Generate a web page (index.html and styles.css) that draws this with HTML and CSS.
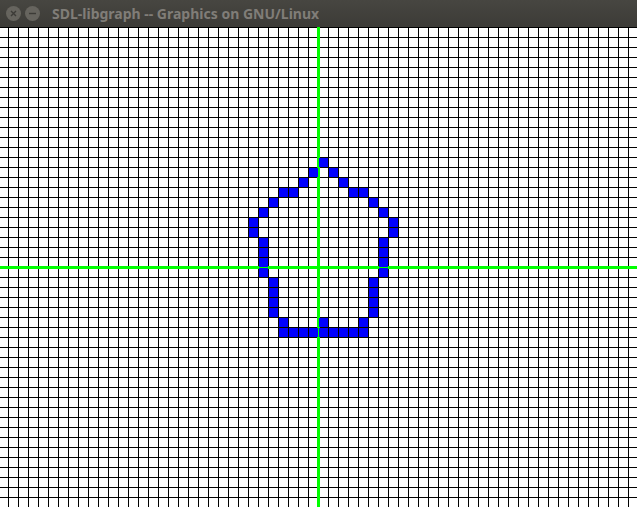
FILE: index.html
```html
<!DOCTYPE html>
<html lang="en">
<head>
<meta charset="utf-8">
<title>SDL-libgraph -- Graphics on GNU/Linux</title>
<link rel="stylesheet" href="styles.css">
</head>
<body>
<div class="window">
  <header class="titlebar">
    <button class="control" type="button" aria-label="Close">
      <svg viewBox="0 0 15 15" aria-hidden="true"><circle cx="7.5" cy="7.5" r="7.5"/><path d="M5 5l5 5M10 5l-5 5"/></svg>
    </button>
    <button class="control" type="button" aria-label="Minimize">
      <svg viewBox="0 0 15 15" aria-hidden="true"><circle cx="7.5" cy="7.5" r="7.5"/><path d="M4 7.5h7"/></svg>
    </button>
    <h1 class="title">SDL-libgraph -- Graphics on GNU/Linux</h1>
  </header>
  <main class="stage">
    <svg class="plot" role="img" aria-label="Pixel outline plotted on a grid" shape-rendering="crispEdges">
      <defs>
        <pattern id="cells" x="8" y="0" width="10" height="10" patternUnits="userSpaceOnUse">
          <path d="M0 0h10v1h-9v9h-1z"/>
        </pattern>
      </defs>
      <rect class="paper" width="100%" height="100%"/>
      <rect class="axis" x="317" y="0" width="3" height="100%"/>
      <rect class="axis" x="0" y="239" width="100%" height="3"/>
      <!-- One 9px square per plotted cell, on a 10px pitch -->
      <path class="ink" transform="translate(9 1)" d="
        M310 130h9v9h-9z
        M300 140h9v9h-9z M320 140h9v9h-9z
        M290 150h9v9h-9z M330 150h9v9h-9z
        M270 160h9v9h-9z M280 160h9v9h-9z M340 160h9v9h-9z M350 160h9v9h-9z
        M260 170h9v9h-9z M360 170h9v9h-9z
        M250 180h9v9h-9z M370 180h9v9h-9z
        M240 190h9v9h-9z M380 190h9v9h-9z
        M240 200h9v9h-9z M380 200h9v9h-9z
        M250 210h9v9h-9z M370 210h9v9h-9z
        M250 220h9v9h-9z M370 220h9v9h-9z
        M250 230h9v9h-9z M370 230h9v9h-9z
        M250 240h9v9h-9z M370 240h9v9h-9z
        M260 250h9v9h-9z M360 250h9v9h-9z
        M260 260h9v9h-9z M360 260h9v9h-9z
        M260 270h9v9h-9z M360 270h9v9h-9z
        M260 280h9v9h-9z M360 280h9v9h-9z
        M270 290h9v9h-9z M310 290h9v9h-9z M350 290h9v9h-9z
        M270 300h9v9h-9z M280 300h9v9h-9z M290 300h9v9h-9z M300 300h9v9h-9z M310 300h9v9h-9z
        M320 300h9v9h-9z M330 300h9v9h-9z M340 300h9v9h-9z M350 300h9v9h-9z"/>
    </svg>
  </main>
</div>
</body>
</html>
```
FILE: styles.css
```css
* {
  box-sizing: border-box;
}

body {
  margin: 0;
  background: #fff;
}

.window {
  display: flex;
  flex-direction: column;
  height: 100vh;
}

.titlebar {
  display: flex;
  flex: none;
  align-items: center;
  gap: 4px;
  height: 27px;
  padding: 0 6px;
  background: linear-gradient(#474641, #3c3b37);
}

.control {
  width: 15px;
  height: 15px;
  padding: 0;
  border: 0;
  background: none;
}

.control svg {
  display: block;
  width: 100%;
  height: 100%;
}

.control circle {
  fill: #66645e;
}

.control path {
  fill: none;
  stroke: #3c3b37;
  stroke-width: 1.4;
}

.title {
  margin: 0 0 0 8px;
  overflow: hidden;
  color: #807d78;
  font: bold 14px/20px "Noto Sans", "Open Sans", sans-serif;
  white-space: nowrap;
  text-overflow: ellipsis;
}

.stage {
  flex: 1;
  min-height: 0;
}

.plot {
  display: block;
  width: 100%;
  height: 100%;
}

.paper {
  fill: url(#cells);
}

.axis {
  fill: #0f0;
}

.ink {
  fill: #00f;
}
```
